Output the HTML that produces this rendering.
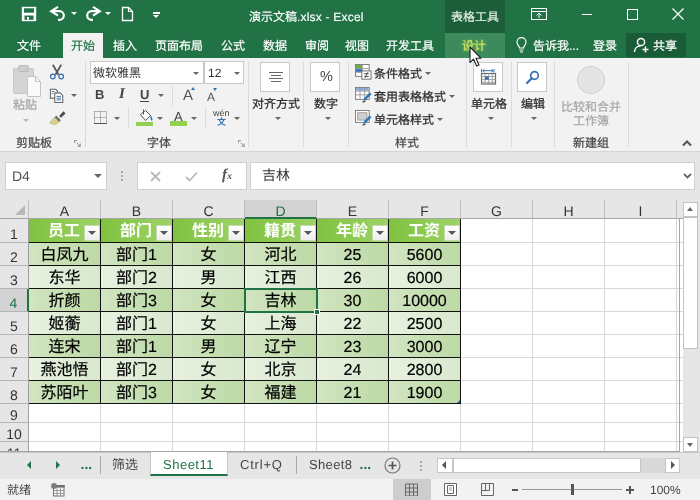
<!DOCTYPE html>
<html lang="zh-CN">
<head>
<meta charset="utf-8">
<title>演示文稿.xlsx - Excel</title>
<style>
*{box-sizing:border-box;margin:0;padding:0}
html,body{width:700px;height:500px;overflow:hidden;background:#e6e6e6}
body{-webkit-font-smoothing:antialiased;text-rendering:geometricPrecision;font-family:"Liberation Sans","Noto Sans CJK SC",sans-serif;font-size:12px;color:#333;position:relative}
.abs{position:absolute}
.t{position:absolute;white-space:nowrap;line-height:1}
/* title bar */
#title{left:0;top:0;width:700px;height:58px;background:#217346}
#tooltab{left:445px;top:0;width:60px;height:58px;background:linear-gradient(#1b5e39 0,#1b5e39 33px,#3d8b5d 33px,#3d8b5d 100%)}
.tt{color:#fff;font-size:12px;-webkit-text-stroke:.15px #fff}
.tab{color:#fff;font-size:12px;top:40px;-webkit-text-stroke:.2px}
#home{left:63px;top:33px;width:40px;height:26px;background:#f2f2f2}
/* ribbon */
#ribbon{left:0;top:58px;width:700px;height:94px;background:#f2f2f2;border-bottom:1px solid #d6d6d6}
.sep{position:absolute;top:62px;width:1px;height:85px;background:#dadada}
.gl{color:#444;font-size:12px;-webkit-text-stroke:.2px #444}
.rl{color:#2b2b2b;font-size:12px;-webkit-text-stroke:.25px #2b2b2b}
.dis{color:#a6a6a6;-webkit-text-stroke:.2px #a6a6a6}
.box{position:absolute;background:#fff;border:1px solid #c8c8c8}
.arr{position:absolute;width:0;height:0;border-left:3px solid transparent;border-right:3px solid transparent;border-top:3px solid #666}
/* formula bar */
#fbar{left:0;top:152px;width:700px;height:48px;background:#e6e6e6}
/* grid */
#grid{left:0;top:200px;width:683px;height:252px;background:#fff;overflow:hidden}
.ch{position:absolute;top:0;height:19px;background:#e6e6e6;border-right:1px solid #bdbdbd;border-bottom:1px solid #a6a6a6;color:#333;font-size:14px;text-align:center;line-height:23px}
.ch.sel{background:#d3d3d3;border-bottom:2px solid #217346;color:#217346}
.rh{position:absolute;left:0;width:29px;background:#e6e6e6;border-bottom:1px solid #b4b4b4;border-right:1px solid #9f9f9f;color:#333;font-size:14px;text-align:center}
.rh.sel{background:#d3d3d3;border-right:2px solid #217346;color:#217346}
.vl{position:absolute;top:19px;width:1px;height:233px;background:#d8d8d8}
.hl{position:absolute;left:29px;height:1px;width:654px;background:#d8d8d8}
.c{position:absolute;width:72px;height:23px;border-right:1px solid #111;border-bottom:1px solid #111;text-align:center;font-size:16px;line-height:26px;color:#000;-webkit-text-stroke:.2px #000;white-space:nowrap;overflow:hidden}
.h{background:linear-gradient(90deg,#7fc23f,#9ed367);color:#fff;-webkit-text-stroke:0;font-weight:bold;text-align:left;line-height:25px}
.h span{padding-left:19px}
.o{background:linear-gradient(90deg,#d1e5c1,#bcd9a5)}
.e{background:linear-gradient(90deg,#e7f1e0,#d8e8cd)}
.dd{position:absolute;right:0;top:5.500px;width:16px;height:16px;background:linear-gradient(#fff,#eee);border:1px solid #c4d8b0}
.dd:after{content:"";position:absolute;left:3px;top:5px;border-left:4px solid transparent;border-right:4px solid transparent;border-top:4.500px solid #555}
/* sheet tabs */
#tabs{left:0;top:452px;width:700px;height:26px;background:#e6e6e6;border-top:1px solid #c6c6c6}
.st{color:#444;font-size:13px;top:458px}
/* status */
#status{left:0;top:479px;width:700px;height:21px;background:#f2f2f2}
</style>
</head>
<body><div id="wrap" style="position:absolute;left:0;top:0;width:700px;height:500px;will-change:transform;opacity:.999">
<!-- TITLE + TABS -->
<div id="title" class="abs"></div>
<div id="tooltab" class="abs"></div>
<div id="home" class="abs"></div>
<div class="t tt" style="left:249px;top:11px">演示文稿<span style="letter-spacing:.2px">.xlsx - Excel</span></div>
<div class="t tt" style="left:451px;top:11px;color:#e2eee6">表格工具</div>
<div class="t tab" style="left:17px">文件</div>
<div class="t tab" style="left:71px;color:#217346">开始</div>
<div class="t tab" style="left:113px">插入</div>
<div class="t tab" style="left:155px">页面布局</div>
<div class="t tab" style="left:221px">公式</div>
<div class="t tab" style="left:263px">数据</div>
<div class="t tab" style="left:305px">审阅</div>
<div class="t tab" style="left:345px">视图</div>
<div class="t tab" style="left:386px">开发工具</div>
<div class="t tab" style="left:462px;color:#c9e265;text-shadow:0 0 3px #a4cf3c">设计</div>
<div class="t tab" style="left:533px">告诉我...</div>
<div class="t tab" style="left:593px">登录</div>
<div class="abs" style="left:626px;top:33px;width:60px;height:24px;background:#1a5c38"></div>
<div class="t tab" style="left:653px">共享</div>

<!-- QAT -->
<svg class="abs" style="left:21px;top:6px" width="16" height="16" viewBox="0 0 16 16">
 <rect x=".8" y=".8" width="14.400" height="14.400" fill="#fff"/>
 <rect x="3" y="2.300" width="10" height="4.400" fill="#217346"/>
 <rect x="3.500" y="9.500" width="9" height="4.300" fill="#217346"/>
 <rect x="6" y="11" width="2" height="2.800" fill="#fff"/>
</svg>
<svg class="abs" style="left:49px;top:5px" width="18" height="17" viewBox="0 0 18 17">
 <path d="M3 6.200h7.500a4.300 4.300 0 0 1 0 8.600h-1.500" fill="none" stroke="#fff" stroke-width="2.200"/>
 <path d="M9 1.800L2.200 6.200 9 10.600" fill="none" stroke="#fff" stroke-width="2.200"/>
</svg>
<div class="arr" style="left:71px;top:12px;border-top-color:#fff"></div>
<svg class="abs" style="left:84px;top:5px" width="18" height="17" viewBox="0 0 18 17">
 <path d="M15 6.200H7.500a4.300 4.300 0 0 0 0 8.600h1.500" fill="none" stroke="#fff" stroke-width="2.200"/>
 <path d="M9 1.800l6.800 4.400L9 10.600" fill="none" stroke="#fff" stroke-width="2.200"/>
</svg>
<div class="arr" style="left:105px;top:12px;border-top-color:#fff"></div>
<svg class="abs" style="left:121px;top:6px" width="13" height="16" viewBox="0 0 13 16">
 <path d="M1.500 1.500h6l4 4v9h-10z" fill="none" stroke="#fff" stroke-width="1.300"/><path d="M7.500 1.500v4h4" fill="none" stroke="#fff" stroke-width="1.200"/>
</svg>
<div class="abs" style="left:153px;top:12px;width:7px;height:1.500px;background:#fff"></div>
<div class="arr" style="left:153px;top:15px;border-top-color:#fff;border-left-width:3.500px;border-right-width:3.500px"></div>
<!-- window controls -->
<svg class="abs" style="left:531px;top:8px" width="16" height="12" viewBox="0 0 16 12">
 <rect x=".5" y=".5" width="15" height="11" fill="none" stroke="#fff"/><path d="M.5 3.500h15M8 10V5M5.500 7.500L8 5l2.500 2.500" fill="none" stroke="#fff"/>
</svg>
<div class="abs" style="left:582px;top:14px;width:10px;height:1px;background:#fff"></div>
<div class="abs" style="left:627px;top:9px;width:11px;height:11px;border:1px solid #fff"></div>
<svg class="abs" style="left:672px;top:8px" width="12" height="12" viewBox="0 0 12 12"><path d="M.5.500l11 11M11.500.500l-11 11" stroke="#fff" stroke-width="1.200" fill="none"/></svg>
<!-- bulb, share icons -->
<svg class="abs" style="left:516px;top:37px" width="11" height="16" viewBox="0 0 11 16">
 <path d="M3.500 11c0-2-2.500-3-2.500-5.800a4.500 4.500 0 0 1 9 0c0 2.800-2.500 3.800-2.500 5.800z" fill="none" stroke="#fff" stroke-width="1.200"/>
 <path d="M3.500 13h4M4 15h3" stroke="#fff" stroke-width="1.200" fill="none"/>
</svg>
<svg class="abs" style="left:633px;top:37px" width="17" height="17" viewBox="0 0 17 17">
 <circle cx="8" cy="5" r="3.600" fill="none" stroke="#fff" stroke-width="1.500"/>
 <path d="M1.500 15c0-4 3-6 6-6" fill="none" stroke="#fff" stroke-width="1.500"/>
 <path d="M9.500 12.500h6M12.500 9.500v6" stroke="#fff" stroke-width="1.500" fill="none"/>
</svg>

<!-- RIBBON -->
<div id="ribbon" class="abs"></div>
<!-- clipboard group -->
<svg class="abs" style="left:10px;top:62px" width="32" height="37" viewBox="0 0 32 37">
 <rect x="3.500" y="6.500" width="20" height="25" rx="1" fill="#d4d4d4" stroke="#c6c6c6"/>
 <rect x="8.500" y="3.500" width="10" height="6" rx="1.500" fill="#cdcdcd" stroke="#bdbdbd"/>
 <path d="M17.500 14.500h8l5 5v15h-13z" fill="#fafafa" stroke="#c4c4c4"/>
 <path d="M25.500 14.500v5h5" fill="none" stroke="#c4c4c4"/>
</svg>
<div class="t rl dis" style="left:13px;top:99px">粘贴</div>
<div class="arr" style="left:23px;top:119px;border-top-color:#b5b5b5"></div>
<svg class="abs" style="left:49px;top:63.500px" width="16" height="16" viewBox="0 0 16 16">
 <path d="M3.800 .8l5.800 10M12.200 .8L6.400 10.800" stroke="#555" stroke-width="1.700" fill="none"/>
 <circle cx="3.800" cy="12.500" r="2.300" fill="none" stroke="#3b72ad" stroke-width="1.300"/>
 <circle cx="12.200" cy="12.500" r="2.300" fill="none" stroke="#3b72ad" stroke-width="1.300"/>
</svg>
<svg class="abs" style="left:48.500px;top:87.500px" width="16" height="15" viewBox="0 0 18 17">
 <path d="M1.500 1.500h6l2 2v8h-8z" fill="#fff" stroke="#666" stroke-width="1.200"/>
 <path d="M6.500 5.500h6l3 3v8h-9z" fill="#fff" stroke="#666" stroke-width="1.200"/>
 <path d="M3 4h3M3 6.500h2M8.500 9.500h5M8.500 11.500h5M8.500 13.500h5" stroke="#3b72ad" stroke-width="1.100" fill="none"/>
</svg>
<div class="arr" style="left:70.500px;top:94px"></div>
<svg class="abs" style="left:49px;top:110px" width="17" height="15.300" viewBox="0 0 20 18">
 <path d="M12 7l5-5.500 2.500 2.500-5.500 5z" fill="#4a4a4a"/>
 <path d="M8.500 6.500l5.500 5.500-2.500 2.500-5.500-5.500z" fill="#6e6e6e"/>
 <path d="M6.500 8.500l5.500 5.500-5 4-6.500-3z" fill="#d9cf92" stroke="#bdb06a" stroke-width=".6"/>
</svg>
<div class="t gl" style="left:16px;top:137px">剪贴板</div>
<svg class="abs lau" style="left:74px;top:140px" width="7" height="7" viewBox="0 0 9 9"><path d="M.5 4V.5H4M3.500 3.500l4.500 4.500M8 4.500V8H4.500" fill="none" stroke="#777"/></svg>
<div class="sep" style="left:85px"></div>
<!-- font group -->
<div class="box" style="left:90px;top:61px;width:114px;height:23px"></div>
<div class="box" style="left:204px;top:61px;width:40px;height:23px"></div>
<div class="t" style="left:93px;top:67px;font-size:12px;color:#333">微软雅黑</div>
<div class="arr" style="left:193px;top:72px"></div>
<div class="t" style="left:208px;top:67px;font-size:12px;color:#333">12</div>
<div class="arr" style="left:233.500px;top:72px"></div>
<div class="t" style="left:95px;top:88px;font-size:13px;font-weight:bold;color:#444">B</div>
<div class="t" style="left:119px;top:87px;font-size:15px;font-weight:bold;font-style:italic;font-family:'Liberation Serif',serif;color:#444">I</div>
<div class="t" style="left:140px;top:88px;font-size:13px;font-weight:bold;color:#444;border-bottom:1px solid #444;padding-bottom:0">U</div>
<div class="arr" style="left:158px;top:94px"></div>
<div class="abs" style="left:172px;top:85px;width:1px;height:21px;background:#dcdcdc"></div>
<div class="t" style="left:183px;top:88px;font-size:15px;color:#555">A</div>
<div class="abs" style="left:191px;top:87px;width:0;height:0;border-left:2.5px solid transparent;border-right:2.5px solid transparent;border-bottom:3px solid #2e75b6"></div>
<div class="t" style="left:207px;top:91px;font-size:12px;color:#555">A</div>
<div class="abs" style="left:213px;top:88px;width:0;height:0;border-left:2.5px solid transparent;border-right:2.5px solid transparent;border-top:3px solid #2e75b6"></div>
<svg class="abs" style="left:94px;top:111px" width="14" height="14" viewBox="0 0 14 14"><path d="M.5.5h12v12M.5.5v12M6.500 .5v12M.5 6.500h12" fill="none" stroke="#777" stroke-dasharray="1 1"/><path d="M0 12.500h13" stroke="#555" fill="none"/></svg>
<div class="arr" style="left:114px;top:117px"></div>
<div class="abs" style="left:128px;top:107px;width:1px;height:21px;background:#dcdcdc"></div>
<svg class="abs" style="left:136px;top:108px" width="19" height="20" viewBox="0 0 19 20">
 <rect x="0" y="14" width="17" height="4" fill="#92d050"/>
 <path d="M4.500 6.500l5-4 5 5-5 5z" fill="#fff" stroke="#555"/>
 <path d="M7.500 1.500v5" stroke="#555" fill="none"/>
 <path d="M14.500 7.500c2 2 2.500 4 1.500 5.500-1.500-1-2-3-1.500-5.500z" fill="#2e75b6"/>
</svg>
<div class="arr" style="left:157px;top:117px"></div>
<div class="t" style="left:174px;top:110px;font-size:13px;color:#444">A</div>
<div class="abs" style="left:170px;top:121px;width:17px;height:5px;background:#92d050"></div>
<div class="arr" style="left:191px;top:117px"></div>
<div class="abs" style="left:205px;top:107px;width:1px;height:21px;background:#dcdcdc"></div>
<div class="t" style="left:213px;top:109px;font-size:9px;color:#444">wén</div>
<div class="t" style="left:217px;top:117px;font-size:9px;font-weight:bold;color:#2e75b6;margin-top:1px">文</div>
<div class="arr" style="left:234px;top:117px"></div>
<div class="t gl" style="left:147px;top:137px">字体</div>
<svg class="abs lau" style="left:238px;top:140px" width="7" height="7" viewBox="0 0 9 9"><path d="M.5 4V.5H4M3.500 3.500l4.500 4.500M8 4.500V8H4.500" fill="none" stroke="#777"/></svg>
<div class="sep" style="left:248px"></div>
<!-- align -->
<div class="box" style="left:260px;top:62px;width:30px;height:30px"></div>
<svg class="abs" style="left:269px;top:72px" width="14" height="10" viewBox="0 0 14 10"><path d="M0 .5h14M2 3.500h10M0 6.500h14M2 9.500h10" stroke="#666" fill="none"/></svg>
<div class="t rl" style="left:252px;top:98px">对齐方式</div>
<div class="arr" style="left:275px;top:117px"></div>
<div class="sep" style="left:303px"></div>
<!-- number -->
<div class="box" style="left:310px;top:62px;width:30px;height:30px"></div>
<div class="t" style="left:320px;top:70px;font-size:14.500px;color:#444">%</div>
<div class="t rl" style="left:314px;top:98px">数字</div>
<div class="arr" style="left:325px;top:117px"></div>
<div class="sep" style="left:348px"></div>
<!-- styles -->
<svg class="abs" style="left:355px;top:64px" width="16.500" height="15.600" viewBox="0 0 18 17">
 <rect x=".5" y=".5" width="15" height="13" fill="#fff" stroke="#777"/>
 <rect x="1" y="1" width="7" height="4" fill="#70ad47"/><rect x="1" y="5" width="7" height="4" fill="#4472c4"/>
 <path d="M8 .5v13M.5 5h15M.5 9h15" stroke="#999" fill="none"/>
 <rect x="7.500" y="7.500" width="10" height="9" fill="#fff" stroke="#666"/>
 <path d="M10 10.500h5M10 13.500h5M14 9l-3 6" stroke="#444" fill="none"/>
</svg>
<svg class="abs" style="left:355px;top:87px" width="16.500" height="15.600" viewBox="0 0 18 17">
 <rect x=".5" y=".5" width="15" height="13" fill="#fff" stroke="#777"/>
 <rect x="1" y="1" width="14" height="3" fill="#8faadc"/>
 <path d="M5.500 .5v13M10.500 .5v13M.5 4.500h15M.5 8.500h15" stroke="#999" fill="none"/>
 <path d="M16 6l2 2-6 6-3 1 1-3z" fill="#2e75b6"/><path d="M8 17c0-2 2-3 4-2-1 2-2 2-4 2z" fill="#555"/>
</svg>
<svg class="abs" style="left:355px;top:110px" width="16.500" height="15.600" viewBox="0 0 18 17">
 <rect x=".5" y=".5" width="15" height="13" fill="#fff" stroke="#777"/>
 <rect x="3" y="3" width="10" height="8" fill="#d0d0d0" stroke="#999"/>
 <path d="M16 6l2 2-6 6-3 1 1-3z" fill="#2e75b6"/><path d="M8 17c0-2 2-3 4-2-1 2-2 2-4 2z" fill="#555"/>
</svg>
<div class="t rl" style="left:374px;top:68px">条件格式</div><div class="arr" style="left:425px;top:72px"></div>
<div class="t rl" style="left:374px;top:91px">套用表格格式</div><div class="arr" style="left:449px;top:95px"></div>
<div class="t rl" style="left:374px;top:114px">单元格样式</div><div class="arr" style="left:437px;top:118px"></div>
<div class="t gl" style="left:395px;top:137px">样式</div>
<div class="sep" style="left:466px"></div>
<!-- cells -->
<div class="box" style="left:473px;top:62px;width:30px;height:30px"></div>
<svg class="abs" style="left:480px;top:68px" width="17" height="18" viewBox="0 0 17 18">
 <path d="M1.500 1v3.500M14 1v3.500M2.500 2.700h10.500M4.500 1.200L2.800 2.700l1.700 1.500M11.500 1.200l1.700 1.500-1.700 1.500" stroke="#3b72ad" fill="none"/>
 <rect x="1.500" y="5.500" width="14" height="10.500" fill="#fff" stroke="#6a6a6a" stroke-width="1.200"/>
 <path d="M5 5.500v10.500M8.700 5.500v10.500M12.300 5.500v10.500M1.500 8.500h14M1.500 11.600h14M1.500 14.300h14" stroke="#9a9a9a" fill="none" stroke-width=".9"/>
 <rect x="5" y="8.300" width="3.800" height="3.400" fill="#3b72ad"/>
</svg>
<div class="t rl" style="left:471px;top:98px">单元格</div>
<div class="arr" style="left:488px;top:117px"></div>
<div class="sep" style="left:511px"></div>
<!-- edit -->
<div class="box" style="left:517px;top:62px;width:30px;height:30px"></div>
<svg class="abs" style="left:524px;top:69px" width="17" height="17" viewBox="0 0 17 17">
 <circle cx="10.500" cy="6.500" r="3.800" fill="#fff" stroke="#3b72ad" stroke-width="1.700"/>
 <path d="M7.500 9.500l-4.500 4.500" stroke="#3b72ad" stroke-width="2.300" stroke-linecap="round"/>
</svg>
<div class="t rl" style="left:521px;top:98px">编辑</div>
<div class="arr" style="left:531px;top:117px"></div>
<div class="sep" style="left:554px"></div>
<!-- compare -->
<div class="abs" style="left:577px;top:66px;width:28px;height:28px;border-radius:50%;background:#e4e4e4;border:1px solid #cfcfcf"></div>
<div class="t rl dis" style="left:561px;top:101px">比较和合并</div>
<div class="t rl dis" style="left:573px;top:115px">工作簿</div>
<div class="t gl" style="left:573px;top:137px">新建组</div>
<div class="sep" style="left:628px"></div>
<svg class="abs" style="left:682px;top:140px" width="10" height="7" viewBox="0 0 10 7"><path d="M1 5.500l4-4 4 4" fill="none" stroke="#555" stroke-width="2"/></svg>
<!-- FORMULA BAR -->
<div id="fbar" class="abs"></div>
<div class="abs" style="left:5px;top:162px;width:102px;height:28px;background:#fff;border:1px solid #d0d0d0"></div>
<div class="t" style="left:12px;top:169px;font-size:14px;color:#555">D4</div>
<div class="arr" style="left:94px;top:174px;border-left-width:4px;border-right-width:4px;border-top-width:4px"></div>
<div class="abs" style="left:121px;top:171px;width:2px;height:2px;background:#aaa;box-shadow:0 4px 0 #aaa,0 8px 0 #aaa"></div>
<div class="abs" style="left:137px;top:162px;width:110px;height:28px;background:#fff;border:1px solid #d0d0d0"></div>
<svg class="abs" style="left:150px;top:171px" width="11" height="11" viewBox="0 0 11 11"><path d="M1 1l9 9M10 1l-9 9" stroke="#b9b9b9" stroke-width="1.800" fill="none"/></svg>
<svg class="abs" style="left:185px;top:171px" width="13" height="11" viewBox="0 0 13 11"><path d="M1 6l3.500 3.500L12 1.500" stroke="#b9b9b9" stroke-width="1.800" fill="none"/></svg>
<div class="t" style="left:222px;top:168px;font-size:15px;font-weight:bold;font-style:italic;font-family:'Liberation Serif',serif;color:#555">f<span style="font-size:10px">x</span></div>
<div class="abs" style="left:250px;top:162px;width:445px;height:28px;background:#fff;border:1px solid #d0d0d0"></div>
<div class="t" style="left:262px;top:168px;font-size:14px;color:#333">吉林</div>
<svg class="abs" style="left:683px;top:173px" width="9" height="7" viewBox="0 0 9 7"><path d="M1 1l3.500 3.500L8 1" fill="none" stroke="#666" stroke-width="1.800"/></svg>
<!-- GRID -->
<!-- GRID-START -->
<div id="grid" class="abs">
<div class="vl" style="left:28px"></div>
<div class="vl" style="left:100px"></div>
<div class="vl" style="left:172px"></div>
<div class="vl" style="left:244px"></div>
<div class="vl" style="left:316px"></div>
<div class="vl" style="left:388px"></div>
<div class="vl" style="left:460px"></div>
<div class="vl" style="left:532px"></div>
<div class="vl" style="left:604px"></div>
<div class="vl" style="left:676px"></div>
<div class="hl" style="top:42px"></div>
<div class="hl" style="top:65px"></div>
<div class="hl" style="top:88px"></div>
<div class="hl" style="top:111px"></div>
<div class="hl" style="top:134px"></div>
<div class="hl" style="top:157px"></div>
<div class="hl" style="top:180px"></div>
<div class="hl" style="top:203px"></div>
<div class="hl" style="top:222px"></div>
<div class="hl" style="top:241px"></div>
<div class="hl" style="top:260px"></div>
<div class="ch" style="left:0;width:29px"></div>
<svg class="abs" style="left:15px;top:5px" width="11" height="11" viewBox="0 0 11 11"><path d="M10 0v10H0z" fill="#b8b8b8"/></svg>
<div class="ch" style="left:29px;width:72px">A</div>
<div class="ch" style="left:101px;width:72px">B</div>
<div class="ch" style="left:173px;width:72px">C</div>
<div class="ch sel" style="left:245px;width:72px">D</div>
<div class="ch" style="left:317px;width:72px">E</div>
<div class="ch" style="left:389px;width:72px">F</div>
<div class="ch" style="left:461px;width:72px">G</div>
<div class="ch" style="left:533px;width:72px">H</div>
<div class="ch" style="left:605px;width:72px">I</div>
<div class="rh" style="top:19px;height:24px;line-height:30px">1</div>
<div class="rh" style="top:43px;height:23px;line-height:29px">2</div>
<div class="rh" style="top:66px;height:23px;line-height:29px">3</div>
<div class="rh sel" style="top:89px;height:23px;line-height:29px">4</div>
<div class="rh" style="top:112px;height:23px;line-height:29px">5</div>
<div class="rh" style="top:135px;height:23px;line-height:29px">6</div>
<div class="rh" style="top:158px;height:23px;line-height:29px">7</div>
<div class="rh" style="top:181px;height:23px;line-height:29px">8</div>
<div class="rh" style="top:204px;height:19px;line-height:23px">9</div>
<div class="rh" style="top:223px;height:19px;line-height:23px">10</div>
<div class="rh" style="top:242px;height:19px;line-height:23px">11</div>
<div class="c h" style="left:29px;top:19px;height:24px"><span>员工</span><i class="dd"></i></div>
<div class="c h" style="left:101px;top:19px;height:24px"><span>部门</span><i class="dd"></i></div>
<div class="c h" style="left:173px;top:19px;height:24px"><span>性别</span><i class="dd"></i></div>
<div class="c h" style="left:245px;top:19px;height:24px"><span>籍贯</span><i class="dd"></i></div>
<div class="c h" style="left:317px;top:19px;height:24px"><span>年龄</span><i class="dd"></i></div>
<div class="c h" style="left:389px;top:19px;height:24px"><span>工资</span><i class="dd"></i></div>
<div class="c o" style="left:29px;top:43px">白凤九</div>
<div class="c o" style="left:101px;top:43px">部门1</div>
<div class="c o" style="left:173px;top:43px">女</div>
<div class="c o" style="left:245px;top:43px">河北</div>
<div class="c o" style="left:317px;top:43px">25</div>
<div class="c o" style="left:389px;top:43px">5600</div>
<div class="c e" style="left:29px;top:66px">东华</div>
<div class="c e" style="left:101px;top:66px">部门2</div>
<div class="c e" style="left:173px;top:66px">男</div>
<div class="c e" style="left:245px;top:66px">江西</div>
<div class="c e" style="left:317px;top:66px">26</div>
<div class="c e" style="left:389px;top:66px">6000</div>
<div class="c o" style="left:29px;top:89px">折颜</div>
<div class="c o" style="left:101px;top:89px">部门3</div>
<div class="c o" style="left:173px;top:89px">女</div>
<div class="c o" style="left:245px;top:89px">吉林</div>
<div class="c o" style="left:317px;top:89px">30</div>
<div class="c o" style="left:389px;top:89px">10000</div>
<div class="c e" style="left:29px;top:112px">姬蘅</div>
<div class="c e" style="left:101px;top:112px">部门1</div>
<div class="c e" style="left:173px;top:112px">女</div>
<div class="c e" style="left:245px;top:112px">上海</div>
<div class="c e" style="left:317px;top:112px">22</div>
<div class="c e" style="left:389px;top:112px">2500</div>
<div class="c o" style="left:29px;top:135px">连宋</div>
<div class="c o" style="left:101px;top:135px">部门1</div>
<div class="c o" style="left:173px;top:135px">男</div>
<div class="c o" style="left:245px;top:135px">辽宁</div>
<div class="c o" style="left:317px;top:135px">23</div>
<div class="c o" style="left:389px;top:135px">3000</div>
<div class="c e" style="left:29px;top:158px">燕池悟</div>
<div class="c e" style="left:101px;top:158px">部门2</div>
<div class="c e" style="left:173px;top:158px">女</div>
<div class="c e" style="left:245px;top:158px">北京</div>
<div class="c e" style="left:317px;top:158px">24</div>
<div class="c e" style="left:389px;top:158px">2800</div>
<div class="c o" style="left:29px;top:181px">苏陌叶</div>
<div class="c o" style="left:101px;top:181px">部门3</div>
<div class="c o" style="left:173px;top:181px">女</div>
<div class="c o" style="left:245px;top:181px">福建</div>
<div class="c o" style="left:317px;top:181px">21</div>
<div class="c o" style="left:389px;top:181px">1900</div>
<div class="abs" style="left:244px;top:88px;width:74px;height:25px;border:2px solid #217346"></div>
<div class="abs" style="left:314px;top:109px;width:6px;height:6px;background:#217346;border:1px solid #fff"></div>
<div class="abs" style="left:457px;top:200px;width:0;height:0;border-left:3px solid transparent;border-bottom:3px solid #2e5aa8"></div>
<div class="abs" style="left:677px;top:0;width:6px;height:19px;background:#e6e6e6;border-bottom:1px solid #a6a6a6"></div>
<div class="abs" style="left:679px;top:18px;width:1px;height:234px;background:#a6a6a6"></div>
<div class="abs" style="left:0;top:251px;width:680px;height:1px;background:#a6a6a6"></div>
</div>
<div class="abs" style="left:683px;top:200px;width:17px;height:252px;background:#e6e6e6"></div>
<div class="abs" style="left:683px;top:202px;width:15px;height:15px;background:#fff;border:1px solid #c2c2c2"></div>
<div class="abs" style="left:687px;top:207px;width:0;height:0;border-left:3.500px solid transparent;border-right:3.500px solid transparent;border-bottom:4px solid #666"></div>
<div class="abs" style="left:683px;top:217px;width:15px;height:132px;background:#fff;border:1px solid #c2c2c2"></div>
<div class="abs" style="left:683px;top:437px;width:15px;height:15px;background:#fff;border:1px solid #c2c2c2"></div>
<div class="abs" style="left:687px;top:443px;width:0;height:0;border-left:3.500px solid transparent;border-right:3.500px solid transparent;border-top:4px solid #666"></div>
<!-- GRID-END -->
<!-- SHEET TABS -->
<div id="tabs" class="abs"></div>
<div class="abs" style="left:27px;top:461px;width:0;height:0;border-top:4px solid transparent;border-bottom:4px solid transparent;border-right:4px solid #217346"></div>
<div class="abs" style="left:56px;top:461px;width:0;height:0;border-top:4px solid transparent;border-bottom:4px solid transparent;border-left:4px solid #217346"></div>
<div class="t" style="left:80.5px;top:456.500px;font-size:14px;font-weight:bold;color:#1e6b3f">...</div>
<div class="abs" style="left:100px;top:456px;width:1px;height:18px;background:#ababab"></div>
<div class="t st" style="left:112px">筛选</div>
<div class="abs" style="left:150px;top:452px;width:78px;height:24px;background:#fff;border-bottom:2px solid #217346;border-left:1px solid #c6c6c6;border-right:1px solid #c6c6c6"></div>
<div class="t st" style="left:163px;color:#217346;letter-spacing:.5px">Sheet11</div>
<div class="t st" style="left:240px;letter-spacing:.8px">Ctrl+Q</div>
<div class="abs" style="left:296px;top:456px;width:1px;height:18px;background:#ababab"></div>
<div class="t st" style="left:309px;letter-spacing:.35px">Sheet8</div>
<div class="t" style="left:359.5px;top:456.500px;font-size:14px;font-weight:bold;color:#1e6b3f">...</div>
<svg class="abs" style="left:384px;top:457px" width="17" height="17" viewBox="0 0 17 17"><circle cx="8.500" cy="8.500" r="7.500" fill="none" stroke="#777" stroke-width="1.200"/><path d="M4.500 8.500h8M8.500 4.500v8" stroke="#555" stroke-width="1.700" fill="none"/></svg>
<div class="abs" style="left:420px;top:461px;width:2px;height:2px;background:#aaa;box-shadow:0 4px 0 #aaa,0 8px 0 #aaa"></div>
<div class="abs" style="left:437px;top:458px;width:16px;height:15px;background:#fff;border:1px solid #c6c6c6"></div>
<div class="abs" style="left:442px;top:461px;width:0;height:0;border-top:4px solid transparent;border-bottom:4px solid transparent;border-right:4px solid #555"></div>
<div class="abs" style="left:453px;top:458px;width:188px;height:15px;background:#fff;border:1px solid #c6c6c6"></div>
<div class="abs" style="left:641px;top:458px;width:24px;height:15px;background:#d9d9d9"></div>
<div class="abs" style="left:665px;top:458px;width:15px;height:15px;background:#fff;border:1px solid #c6c6c6"></div>
<div class="abs" style="left:671px;top:461px;width:0;height:0;border-top:4px solid transparent;border-bottom:4px solid transparent;border-left:4px solid #555"></div>
<!-- STATUS -->
<div id="status" class="abs"></div>
<div class="t" style="left:7px;top:484px;font-size:12px;color:#444">就绪</div>
<svg class="abs" style="left:51px;top:483px" width="14" height="14" viewBox="0 0 14 14">
 <rect x="2.500" y="2.500" width="10.500" height="10.500" fill="#fff" stroke="#707070"/>
 <rect x="2" y="2" width="11.500" height="2.600" fill="#707070"/>
 <path d="M6 4.500v8.500M9.500 4.500v8.500M2.500 7.500h10.500M2.500 10.300h10.500" stroke="#8a8a8a" fill="none" stroke-width=".9"/>
 <circle cx="3" cy="3" r="2.900" fill="#7d7d7d"/>
</svg>
<div class="abs" style="left:393px;top:479px;width:38px;height:21px;background:#cdcdcd"></div>
<svg class="abs" style="left:405px;top:483px" width="13" height="13" viewBox="0 0 13 12"><path d="M.5.500h12v12H.5zM4.500.500v12M8.500.500v12M.5 4.500h12M.5 8.500h12" fill="none" stroke="#666"/></svg>
<svg class="abs" style="left:444px;top:483px" width="13" height="13" viewBox="0 0 13 13"><path d="M.5.500h12v12H.5z" fill="#fff" stroke="#666"/><path d="M3.500 2.500h6v8h-6z" fill="none" stroke="#666"/><path d="M5 5h3M5 7h3" fill="none" stroke="#888" stroke-width=".8"/></svg>
<svg class="abs" style="left:481px;top:483px" width="13" height="13" viewBox="0 0 13 13"><path d="M.5.500h12v12H.5zM4.500.500v7M.5 7.500h8M8.500 7.500v-7" fill="none" stroke="#666"/></svg>
<div class="abs" style="left:512px;top:489px;width:6px;height:2px;background:#555"></div>
<div class="abs" style="left:522px;top:489px;width:100px;height:1px;background:#999"></div>
<div class="abs" style="left:570.500px;top:484px;width:3.500px;height:11px;background:#555"></div>
<div class="abs" style="left:626px;top:489px;width:8px;height:2px;background:#555"></div>
<div class="abs" style="left:629px;top:486px;width:2px;height:8px;background:#555"></div>
<div class="t" style="left:650px;top:484px;font-size:12px;color:#444">100%</div>
<!-- mouse cursor -->
<svg class="abs" style="left:469px;top:46px;z-index:9" width="14" height="21" viewBox="0 0 14 21">
 <path d="M1 1v15.500l3.600-3.300 3 6.800 2.400-1-3-6.700H12z" fill="#fff" stroke="#222" stroke-width="1.100" stroke-linejoin="round"/>
</svg>
</div></body>
</html>
